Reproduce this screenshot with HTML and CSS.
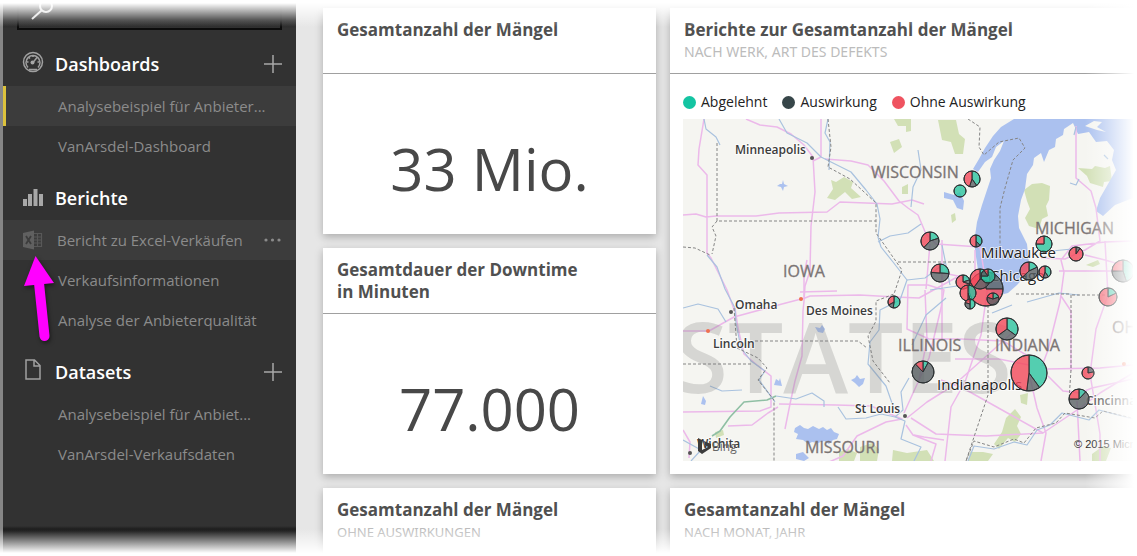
FILE: index.html
```html
<!DOCTYPE html>
<html lang="de">
<head>
<meta charset="utf-8">
<title>Dashboard</title>
<link rel="stylesheet" href="styles.css">
</head>
<body>
<div class="app">
  <nav class="sidebar">
    <label class="search">
      <svg class="search-icon" viewBox="0 0 24 22" aria-hidden="true"><circle cx="16" cy="7" r="6"/><path d="M11.500 11.500L2 20"/></svg>
      <input type="search" aria-label="Suchen">
    </label>

    <section class="section">
      <header class="section-head">
        <svg class="icon" viewBox="0 0 22 22" aria-hidden="true"><circle cx="11" cy="11" r="9.500"/><path d="M6 16.500A7 7 0 1 1 16 16.500M11 11.500l4-5M5 11h1.500M7 6.500l1 1M11 4.500V6M15.500 11H17"/><circle class="solid" cx="10.500" cy="11.500" r="2"/><path d="M7 18.500h8"/></svg>
        <h2>Dashboards</h2>
        <button class="add" type="button" aria-label="Dashboard hinzufügen"><svg viewBox="0 0 18 18"><path d="M9 0v18M0 9h18"/></svg></button>
      </header>
      <a class="item selected" href="#">Analysebeispiel für Anbieter...</a>
      <a class="item" href="#">VanArsdel-Dashboard</a>
    </section>

    <section class="section">
      <header class="section-head">
        <svg class="icon bars" viewBox="0 0 22 22" aria-hidden="true"><path d="M1 14h4v7H1zM6 9h4v12H6zM11.500 4h4v17h-4zM17 9h4v12h-4z"/></svg>
        <h2>Berichte</h2>
      </header>
      <div class="row hover">
        <a class="item" href="#">
          <svg class="excel" viewBox="0 0 20 20" aria-hidden="true"><path d="M0 3l11-2.500v19L0 17z"/><path class="sheet" d="M11 3.500h7.500v13H11M11 7h7M11 10h7M11 13h7M14.500 4v12"/><path class="mark" d="M3 6l5 8M8 6l-5 8"/></svg>
          Bericht zu Excel-Verkäufen
        </a>
        <button class="more" type="button" aria-label="Weitere Optionen"><svg viewBox="0 0 18 4"><circle cx="2" cy="2" r="1.600"/><circle cx="8.500" cy="2" r="1.600"/><circle cx="15" cy="2" r="1.600"/></svg></button>
        <svg class="pointer" viewBox="0 0 32 88" aria-hidden="true"><path class="shaft" d="M17 28L22.500 81"/><path d="M13.500 1L32 28 2 31z"/></svg>
      </div>
      <a class="item" href="#">Verkaufsinformationen</a>
      <a class="item" href="#">Analyse der Anbieterqualität</a>
    </section>

    <section class="section">
      <header class="section-head">
        <svg class="icon" viewBox="0 0 22 22" aria-hidden="true"><path d="M4 1h8.500l5.500 5.500V20H4zM12 1v6h6"/></svg>
        <h2>Datasets</h2>
        <button class="add" type="button" aria-label="Dataset hinzufügen"><svg viewBox="0 0 18 18"><path d="M9 0v18M0 9h18"/></svg></button>
      </header>
      <a class="item" href="#">Analysebeispiel für Anbiet...</a>
      <a class="item" href="#">VanArsdel-Verkaufsdaten</a>
    </section>
  </nav>

  <main class="canvas">
    <article class="card">
      <header class="card-head"><h3>Gesamtanzahl der Mängel</h3></header>
      <p class="value">33 Mio.</p>
    </article>

    <article class="card map-card">
      <header class="card-head"><h3>Berichte zur Gesamtanzahl der Mängel</h3><p>NACH WERK, ART DES DEFEKTS</p></header>
      <ul class="legend">
        <li class="rejected">Abgelehnt</li>
        <li class="impact">Auswirkung</li>
        <li class="no-impact">Ohne Auswirkung</li>
      </ul>
      <svg class="map" viewBox="683 119 450 342" role="img" aria-label="Karte">
        <rect class="land" x="683" y="119" width="450" height="342"/>
        <g class="forest">
          <path d="M894 119h17v12l-5 1v-6h-8zM938 120h18l3 14 6 5-2 15h-8l-4-12-9-2zM890 142l9-3 3 8-8 6zM831 180l5 2 8-5 9 5-2 6 10 9-9 2-7-7-10 8-8-2 6-9zM902 187l6-3v10h-6zM1024 190l8-6 10-1 8 3-1 14-3 6 2 10-6 3-3 10-10-3-4-8 5-9-3-8zM1078 168l14 1 3-3 10 2 5-2 2 15-8 1-1 5-13-4-3-7zM951 215l4-2 1 7-4 3zM1086 265l12-5 2 4-7 3zM1006 418l9-9 6 8-4 9 4 8-6 8-7-4-9 11-5-5 8-12zM1020 395l8-2-1 12-6-2zM839 452l9-3 9 4-3 8h-15zM860 447l12-4 7 6-2 12h-17zM893 450l14 3 20-3 7 11h-42zM970 452h13l10 2-5 7h-20zM1092 454l11-8 8 2-5 13h-14zM715 432l8-2 1 5-8 3z"/>
        </g>
        <g class="water">
          <path d="M1014 119L1001 127 993 136 985 148 979 159 973 169 978 172 985 162 992 157 996 147 1004 141 1000 151 994 160 990 169 991 178 987 190 982 205 977 222 975 236 975 250 978 270 985 285 996 296 1008 293 1017 285 1026 275 1029 263 1027 244 1019 228 1018 216 1021 200 1025 189 1027 174 1033 165 1034 158 1041 153 1044 162 1049 150 1055 147 1056 139 1063 135 1064 129 1073 123 1078 134 1089 132 1096 142 1107 141 1114 150 1112 160 1116 170 1108 184 1100 198 1096 211 1103 216 1115 205 1133 198V119z"/>
          <path d="M944 192l10 3 6-3 4 9-1 9-6-2-4-8-9-2zM795 428l5-3 4 3 4 1 5-3 6 3 4-2 4 3 4-2 3 4 5 2-2 5-4 1-4 4-5-3-6 2-6-1-4 2-5-4-7-1 2-5-4-2zM796 454l7-2 6 6-5 3-8-2zM851 380l4-2 2-3 3 4 5-1-2 6-4 3-4-4zM815 327l5 1 2-3 3 4-2 4-5-1zM780 184h2l1-4 1 4 4 2-4 1-1 4-2-4-4-1zM703 396l3 5-1 4-4-1zM774 385l2-6 3 2 1-3 2 8z"/>
        </g>
        <path class="land" d="M1085 126l9-5 8 1-5 5 9 5-9-2z"/>
        <g class="roads">
          <path d="M746 119l14 6 17 2 14 7 13 11 9 12 2 35-4 34-1 45-5 15-1 15-1 10-1 45-7 25-5 23-5 25"/>
          <path d="M704 119l-5 30-1 16 9 10v78l4 5 16 32 8 22M683 215l13-1 10 3 10-1h40l23-3 48-1 13-10 52 2 20-4 12 4M821 119v38l-8 4M825 159l26 2 17 4 16 16 15 20 9 7 10 7 8 19 10 10 44 3 5 30 4 14M800 292l37-1M683 331h26l25-14 48-13 23-6 5-2 50-1 35 2 24 1 40-22M804 297v-22l3-15"/>
          <path d="M735 308l3 20 6 26 13 11 14 11v31l-11 4-77 1M779 404l57 1 35 1 31 13-16 3-29 14-14 20-14 6M907 418l20-16 27-17 38-34 20-18M904 413l25-55 12-50 3-18-16-5h-20l-1 44 22 10h32l42 2 25 15M911 418l25 16 50 2 57-3 37-25 20-15 33-20"/>
          <path d="M906 425l7 10 23 9-5 17M683 430l7 12-1 16M728 426l24-1 16-12 10-6M914 435l10 2 20 3M988 285l-7 50-16 47-14 25-6 54M1029 373l8 35 9 25-5 28M1043 433l-32-18-50-28-20-7M1029 365l-30-6h-44M1047 369l53-1 33-3M1048 376l15 15 17 2 12-5 41-9M1064 272l-4 30-12 48-6 16M1064 272l-3-12 11-14 33-4 28-1M1076 126v52l15 13 5 17 4 33-15 9-20 9-24-1M1105 241l3 54-12 34-6 45 10 60v27M1059 271h74M1085 255l20 5 28 8M1061 296l10 15v60M942 240v100M925 290l2 50-8 40M1077 401l3 60M975 250v33M930 244l-4 45M943 273l25 5"/>
        </g>
        <path class="greenway" d="M712 436l8-5 10-14 14-15 23-2 9-4"/>
        <g class="rivers">
          <path d="M779 119l8 14 20 10 14 14 30 15 15 18 11 14 3 15-2 18 3 10 12 15 14 18-7 20-20 10-1 20-9 12-2 22 18 22 7 20M828 119l-3 14 5 9-1 28M704 119l2 10 10 8 4 8M707 255l10 12 8 22 10 19 1 15 5 25 10 13 14 10-6 9 16 22M878 242l12-6 18-3 13-9"/>
          <path d="M776 396l20 3 16-6 12 8v6M838 407l8 12 20-1 15-4 14 3 8-7-2-18 8-14M683 308l15-4 20 5 8 13M710 386l12 5 20-1M918 150l3 20-8 17-2 20M945 263l-20 15-18 2M912 345l14-30 20-17M930 290l27-4M942 245l8 40M895 417l10 4-4 18 20 8-7 14M968 461l6-15 20 3 20-7 13 3 10-15 13-5 12-12 27 7 10-10 34 9M683 440l18 10-10 11"/>
          <path d="M1074 135l2-8M1070 183l6 2 3-6M1104 155l4 4M1042 252l30-3M1027 302l32-9 20 2M1012 305l-20 8"/>
        </g>
        <g class="borders">
          <path d="M717 143v78h159M717 221l-5 6 4 9-4 18M683 247l12 1 15 7M734 308l3 40 21 10 9 10-9 12 16 20v61M755 341h103l9 7M683 364h70M898 262h76M828 119l3 28-3 20 22 12 26 24v30l12 17 14 20-8 24-18 7v20l-8 15 5 25 17 22M968 119l12 8-1 20 5 8 15-13 20-4 6 10-12 12-8 28-5 20v45M988 305v90l-10 30-12 36M1071 295v75l-2 30M1016 294h55M1072 295h34M966 461l8-20 20 6 20-8 10 4 12-15 20-5 9-10 30 5 8-7 37 9"/>
        </g>
        <text class="country" x="1012" y="393" text-anchor="end">STATES</text>
        <g class="states">
          <text x="871" y="178">WISCONSIN</text>
          <text x="1035" y="234">MICHIGAN</text>
          <text x="783" y="277">IOWA</text>
          <text x="898" y="351">ILLINOIS</text>
          <text x="995" y="351">INDIANA</text>
          <text x="805" y="453">MISSOURI</text>
          <text x="1112" y="333">OHIO</text>
        </g>
        <g class="town-dots"><circle cx="812" cy="158" r="2"/><circle cx="731" cy="312" r="2"/><circle cx="905" cy="416" r="2"/><circle cx="690" cy="453" r="2"/></g>
        <g class="junctions"><circle cx="801" cy="299" r="2"/><circle cx="708" cy="331" r="2"/><circle cx="1124" cy="364" r="2"/></g>
        <g class="cities">
          <text x="735" y="154">Minneapolis</text>
          <text x="735" y="309">Omaha</text>
          <text x="713" y="348">Lincoln</text>
          <text x="806" y="315">Des Moines</text>
          <text x="855" y="413">St Louis</text>
          <text x="697" y="448">Wichita</text>
          <text x="1086" y="405">Cincinnati</text>
        </g>
        <g class="cities large">
          <text x="981" y="258">Milwaukee</text>
          <text x="990" y="281">Chicago</text>
          <text x="937" y="390">Indianapolis</text>
        </g>
        <g id="pies"></g>
        <path class="bing-mark" d="M698 438l4 2v10l6-3-3-2-1-4 7 3v4l-9 6-4-3z"/>
        <text class="bing" x="712" y="451">Bing</text>
        <text class="credit" x="1074" y="448">© 2015 Microsoft</text>
      </svg>
    </article>

    <article class="card">
      <header class="card-head"><h3>Gesamtdauer der Downtime<br>in Minuten</h3></header>
      <p class="value">77.000</p>
    </article>

    <article class="card last">
      <header class="card-head"><h3>Gesamtanzahl der Mängel</h3><p>OHNE AUSWIRKUNGEN</p></header>
    </article>
    <article class="card last">
      <header class="card-head"><h3>Gesamtanzahl der Mängel</h3><p>NACH MONAT, JAHR</p></header>
    </article>
  </main>
</div>
<script src="script.js"></script>
</body>
</html>
```
FILE: styles.css
```css
* { box-sizing: border-box; }

body {
  margin: 0;
  background: #fff;
  font-family: "Open Sans", "Noto Sans", sans-serif;
  color: #484848;
}

h2, h3, p, ul { margin: 0; padding: 0; }
button { padding: 0; border: 0; background: none; }

.app {
  position: relative;
  display: flex;
  height: 100vh;
  min-height: 556px;
  overflow: hidden;
}

/* Soft edges above, below and to the right of the content */
.app::before,
.app::after {
  content: "";
  position: absolute;
  inset: 0;
  z-index: 3;
  pointer-events: none;
}
.app::before {
  background:
    linear-gradient(#fff 3px, rgba(255, 255, 255, 0) 27px),
    linear-gradient(to top, #fff 3px, rgba(255, 255, 255, 0) 27px);
}
.app::after {
  background: linear-gradient(to left, #fff 3px, rgba(255, 255, 255, 0) 52px);
}

/* Sidebar */
.sidebar {
  flex: 0 0 296px;
  padding-top: 3px;
  border-left: 3px solid #868686;
  background: linear-gradient(#111 20px, #323232 28px, #323232 calc(100% - 30px), #111 calc(100% - 25px));
}

.search { display: flex; height: 27px; margin: 0 14px 12px; border: solid #0c0c0c; border-width: 0 2px 2px; }
.search-icon { flex: none; width: 24px; height: 22px; margin: -4px 0 0 11px; fill: none; stroke: #ddd; stroke-width: 2; }
.search input { flex: 1; min-width: 0; border: 0; outline: 0; background: none; color: #fff; }

.section { margin-bottom: 10px; }
.section-head { display: flex; align-items: center; height: 44px; padding: 0 14px 0 19px; }
.section-head h2 { flex: 1; margin-left: 11px; font-size: 18px; line-height: 24px; font-weight: 600; color: #fff; }
.icon { width: 22px; height: 22px; margin-bottom: 4px; fill: none; stroke: #a0a0a0; stroke-width: 1.5; }
.icon .solid, .icon.bars { fill: #a8a8a8; stroke: none; }
.add { width: 18px; height: 18px; }
.add svg { display: block; width: 18px; height: 18px; stroke: #a8a8a8; stroke-width: 1.5; }

.item {
  position: relative;
  display: flex;
  align-items: center;
  height: 40px;
  padding-left: 55px;
  font-size: 15px;
  line-height: 20px;
  color: #8b8b8b;
  text-decoration: none;
  white-space: nowrap;
}
.item.selected { padding-left: 52px; border-left: 3px solid #dcc23c; background: #3c3c3c; }
.row { position: relative; display: flex; align-items: center; justify-content: space-between; padding-right: 14px; }
.row.hover { background: #3c3c3c; }
.row .item { padding-left: 20px; gap: 14px; }
.excel { width: 20px; height: 20px; fill: #606060; }
.excel .sheet { fill: none; stroke: #585858; stroke-width: 1.2; }
.excel .mark { stroke: #3c3c3c; stroke-width: 1.8; }
.more { width: 18px; height: 18px; }
.more svg { display: block; width: 18px; height: 4px; fill: #8b8b8b; }
.pointer { position: absolute; left: 19px; top: 35px; z-index: 2; width: 32px; height: 88px; fill: #f0f; filter: drop-shadow(1px 2px 2px rgba(0, 0, 0, .5)); }
.pointer .shaft { stroke: #f0f; stroke-width: 10; stroke-linecap: round; }

/* Tiles */
.canvas {
  flex: 1;
  min-width: 0;
  display: grid;
  grid-template-columns: minmax(0, 333fr) minmax(0, 464fr);
  grid-template-rows: auto auto 1fr;
  gap: 14px;
  padding: 8px 3px 0 27px;
  background: #e6e6e6;
}
.card { background: #fff; box-shadow: 0 3px 8px rgba(0, 0, 0, .25); }
.map-card { grid-row: span 2; }
.card-head { min-height: 66px; padding: 11px 14px 9px; border-bottom: 1px solid #a0a0a0; }
.card-head h3 { font-size: 17px; line-height: 22px; font-weight: 700; color: #505050; }
.card-head p { font-family: "Noto Sans", sans-serif; font-size: 14px; line-height: 22px; color: #bcbcbc; }
.last .card-head { border-bottom: 0; }
.last .card-head p { font-size: 13px; }
.value { padding: 63px 0 33px; font-size: 58px; line-height: 64px; text-align: center; }

.legend { display: flex; gap: 15px; padding: 17px 13px 6px; list-style: none; font-size: 14px; line-height: 22px; color: #222; }
.legend li { display: flex; align-items: center; gap: 5px; white-space: nowrap; }
.legend li::before { content: ""; width: 13px; height: 13px; border-radius: 50%; background: #14c4a2; }
.legend .impact::before { background: #374649; }
.legend .no-impact::before { background: #ef5360; }

/* Map */
.map { display: block; width: calc(100% - 14px); margin: 0 1px 13px 13px; }
.land { fill: #f5f5f1; }
.forest { fill: #d2e0b6; }
.water { fill: #abc1ef; }
.roads, .rivers, .borders, .greenway { fill: none; stroke-linejoin: round; }
.roads { stroke: #ecb9ea; stroke-width: 1.5; }
.rivers { stroke: #a9c2df; stroke-width: 1.2; }
.greenway { stroke: #8fbfa4; stroke-width: 1.6; }
.borders { stroke: #858585; stroke-width: 1; stroke-dasharray: 3 2; }
.country { font-size: 98px; font-weight: 600; fill: #777; fill-opacity: .24; }
.states { font-size: 16px; fill: #7b7474; stroke: #7b7474; stroke-width: .3; }
.cities { font-size: 12px; font-weight: 600; fill: #3c3c3c; stroke: #fff; stroke-width: 2; stroke-opacity: .7; paint-order: stroke; }
.cities.large { font-size: 15px; font-weight: 400; fill: #222; }
.town-dots { fill: #555; }
.junctions { fill: #f07050; }
.pie circle { fill: none; stroke: #2d3234; stroke-width: 1; }
.pie path { fill-opacity: .8; stroke: #2d3234; stroke-width: 1; }
.pie .green { fill: #2cc4a0; }
.pie .dark { fill: #5a6265; }
.pie .red { fill: #f2485a; }
.bing-mark { fill: #3c3c3c; }
.bing { font-size: 12px; fill: #666; }
.credit { font-family: "Liberation Sans", sans-serif; font-size: 11px; fill: #222; }
```
FILE: script.js
```js
// Each entry: x, y, radius, then the green, dark and red shares, clockwise from the top.
const sites = [
  [972, 179, 8, 0.40, 0.15, 0.45], [960, 191, 6, 1, 0, 0],
  [930, 241, 9, 0.20, 0.42, 0.38], [976, 241, 6, 0.38, 0.12, 0.50],
  [1044, 244, 8, 0.75, 0, 0.25], [1076, 254, 7, 0, 0.10, 0.90],
  [940, 273, 9, 0.26, 0.50, 0.24], [1029, 271, 9, 0.18, 0.45, 0.37],
  [1045, 272, 6, 0.40, 0.15, 0.45], [1123, 271, 11, 0.45, 0.30, 0.25],
  [986, 289, 17, 0, 0.25, 0.75], [963, 282, 7, 0.20, 0.10, 0.70],
  [968, 293, 8, 0.45, 0.05, 0.50], [980, 279, 10, 0.30, 0.30, 0.40],
  [988, 276, 7, 0.75, 0.15, 0.10], [970, 304, 5, 0.50, 0.30, 0.20],
  [993, 299, 6, 0.20, 0.60, 0.20], [894, 302, 6, 0.52, 0.15, 0.33],
  [1007, 329, 11, 0.35, 0.30, 0.35], [923, 372, 11, 0.08, 0.80, 0.12],
  [1029, 373, 18, 0.40, 0.12, 0.48], [1088, 373, 6, 0, 0.22, 0.78],
  [1079, 399, 10, 0.12, 0.63, 0.25], [1108, 297, 9, 0.18, 0, 0.82]
];

const ns = "http://www.w3.org/2000/svg";
const layer = document.getElementById("pies");

function add(parent, name, attributes) {
  const node = document.createElementNS(ns, name);
  for (const key in attributes) node.setAttribute(key, attributes[key]);
  parent.appendChild(node);
  return node;
}

for (const [x, y, r, green, dark, red] of sites) {
  const pie = add(layer, "g", { class: "pie" });
  let turn = 0;
  for (const [name, share] of [["green", green], ["dark", dark], ["red", red]]) {
    if (!share) continue;
    const point = t => [x + r * Math.sin(t * 2 * Math.PI), y - r * Math.cos(t * 2 * Math.PI)].join(" ");
    const d = share === 1
      ? `M${x - r} ${y}a${r} ${r} 0 1 1 ${2 * r} 0a${r} ${r} 0 1 1 ${-2 * r} 0`
      : `M${x} ${y}L${point(turn)}A${r} ${r} 0 ${share > 0.5 ? 1 : 0} 1 ${point(turn + share)}Z`;
    add(pie, "path", { class: name, d });
    turn += share;
  }
  add(pie, "circle", { cx: x, cy: y, r });
}
```
